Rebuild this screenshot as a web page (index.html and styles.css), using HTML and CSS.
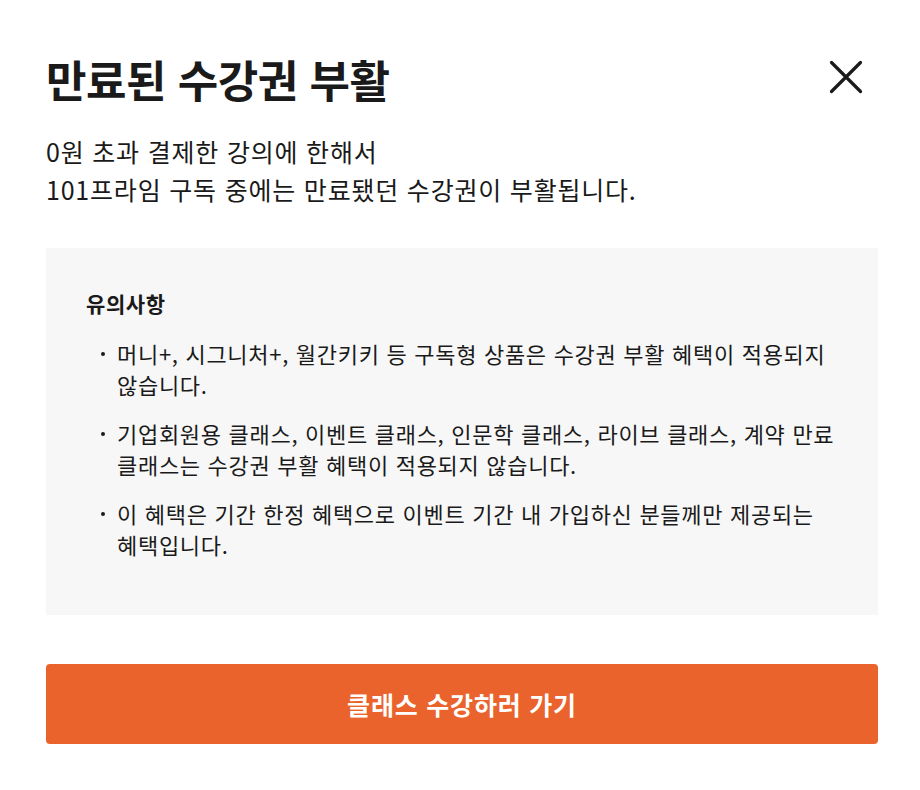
FILE: index.html
```html
<!DOCTYPE html>
<html lang="ko">
<head>
<meta charset="utf-8">
<link rel="stylesheet" href="styles.css">
</head>
<body>
<div class="modal">
  <div class="header">
    <h1 class="title">만료된 수강권 부활</h1>
    <button class="close" aria-label="닫기">
      <svg width="36" height="36" viewBox="0 0 36 36"><path d="M3.5 3.5L32.5 32.5M32.5 3.5L3.5 32.5" stroke="#1a1a1a" stroke-width="3.2" stroke-linecap="round"/></svg>
    </button>
  </div>
  <p class="desc">0원 초과 결제한 강의에 한해서<br>101프라임 구독 중에는 만료됐던 수강권이 부활됩니다.</p>
  <div class="notice">
    <h2 class="notice-title">유의사항</h2>
    <ul class="notice-list">
      <li>머니+, 시그니처+, 월간키키 등 구독형 상품은 수강권 부활 혜택이 적용되지 않습니다.</li>
      <li>기업회원용 클래스, 이벤트 클래스, 인문학 클래스, 라이브 클래스, 계약 만료 클래스는 수강권 부활 혜택이 적용되지 않습니다.</li>
      <li>이 혜택은 기간 한정 혜택으로 이벤트 기간 내 가입하신 분들께만 제공되는 혜택입니다.</li>
    </ul>
  </div>
  <button class="cta">클래스 수강하러 가기</button>
</div>
</body>
</html>
```

FILE: styles.css
```css
html, body {
  margin: 0;
  padding: 0;
  background: #fff;
}
body {
  font-family: "Noto Sans CJK KR", "Noto Sans", sans-serif;
  color: #1a1a1a;
}
.modal {
  padding: 48px 42px 0 46px;
}
.header {
  display: flex;
  justify-content: space-between;
  align-items: flex-start;
}
.title {
  margin: 0;
  font-size: 44px;
  font-weight: 700;
  line-height: 62px;
  letter-spacing: -0.5px;
}
.close {
  border: 0;
  background: none;
  padding: 0;
  width: 36px;
  height: 36px;
  margin: 11px 14px 0 0;
  cursor: pointer;
}
.close svg { display: block; }
.desc {
  margin: 22px 0 0;
  font-size: 25px;
  line-height: 38px;
  letter-spacing: 0.8px;
  color: #1a1a1a;
}
.notice {
  margin-top: 40px;
  width: 832px;
  box-sizing: border-box;
  background: #f7f7f7;
  padding: 40px 40px 46px 40px;
  height: 367px;
}
.notice-title {
  margin: 0;
  font-size: 21px;
  font-weight: 700;
  line-height: 30px;
  letter-spacing: 0.6px;
}
.notice-list {
  list-style: none;
  margin: 20px 0 0;
  padding: 0 0 0 31px;
}
.notice-list li {
  position: relative;
  font-size: 22px;
  line-height: 31px;
  letter-spacing: 0.7px;
  margin-bottom: 18px;
  color: #1a1a1a;
}
.notice-list li::before {
  content: "";
  position: absolute;
  left: -16px;
  top: 14px;
  width: 4px;
  height: 4px;
  border-radius: 50%;
  background: #1a1a1a;
}
.cta {
  display: block;
  margin-top: 49px;
  width: 832px;
  height: 80px;
  border: 0;
  border-radius: 4px;
  background: #ea632c;
  color: #fff;
  font-family: inherit;
  font-size: 25px;
  font-weight: 700;
  letter-spacing: 0.8px;
}
```
